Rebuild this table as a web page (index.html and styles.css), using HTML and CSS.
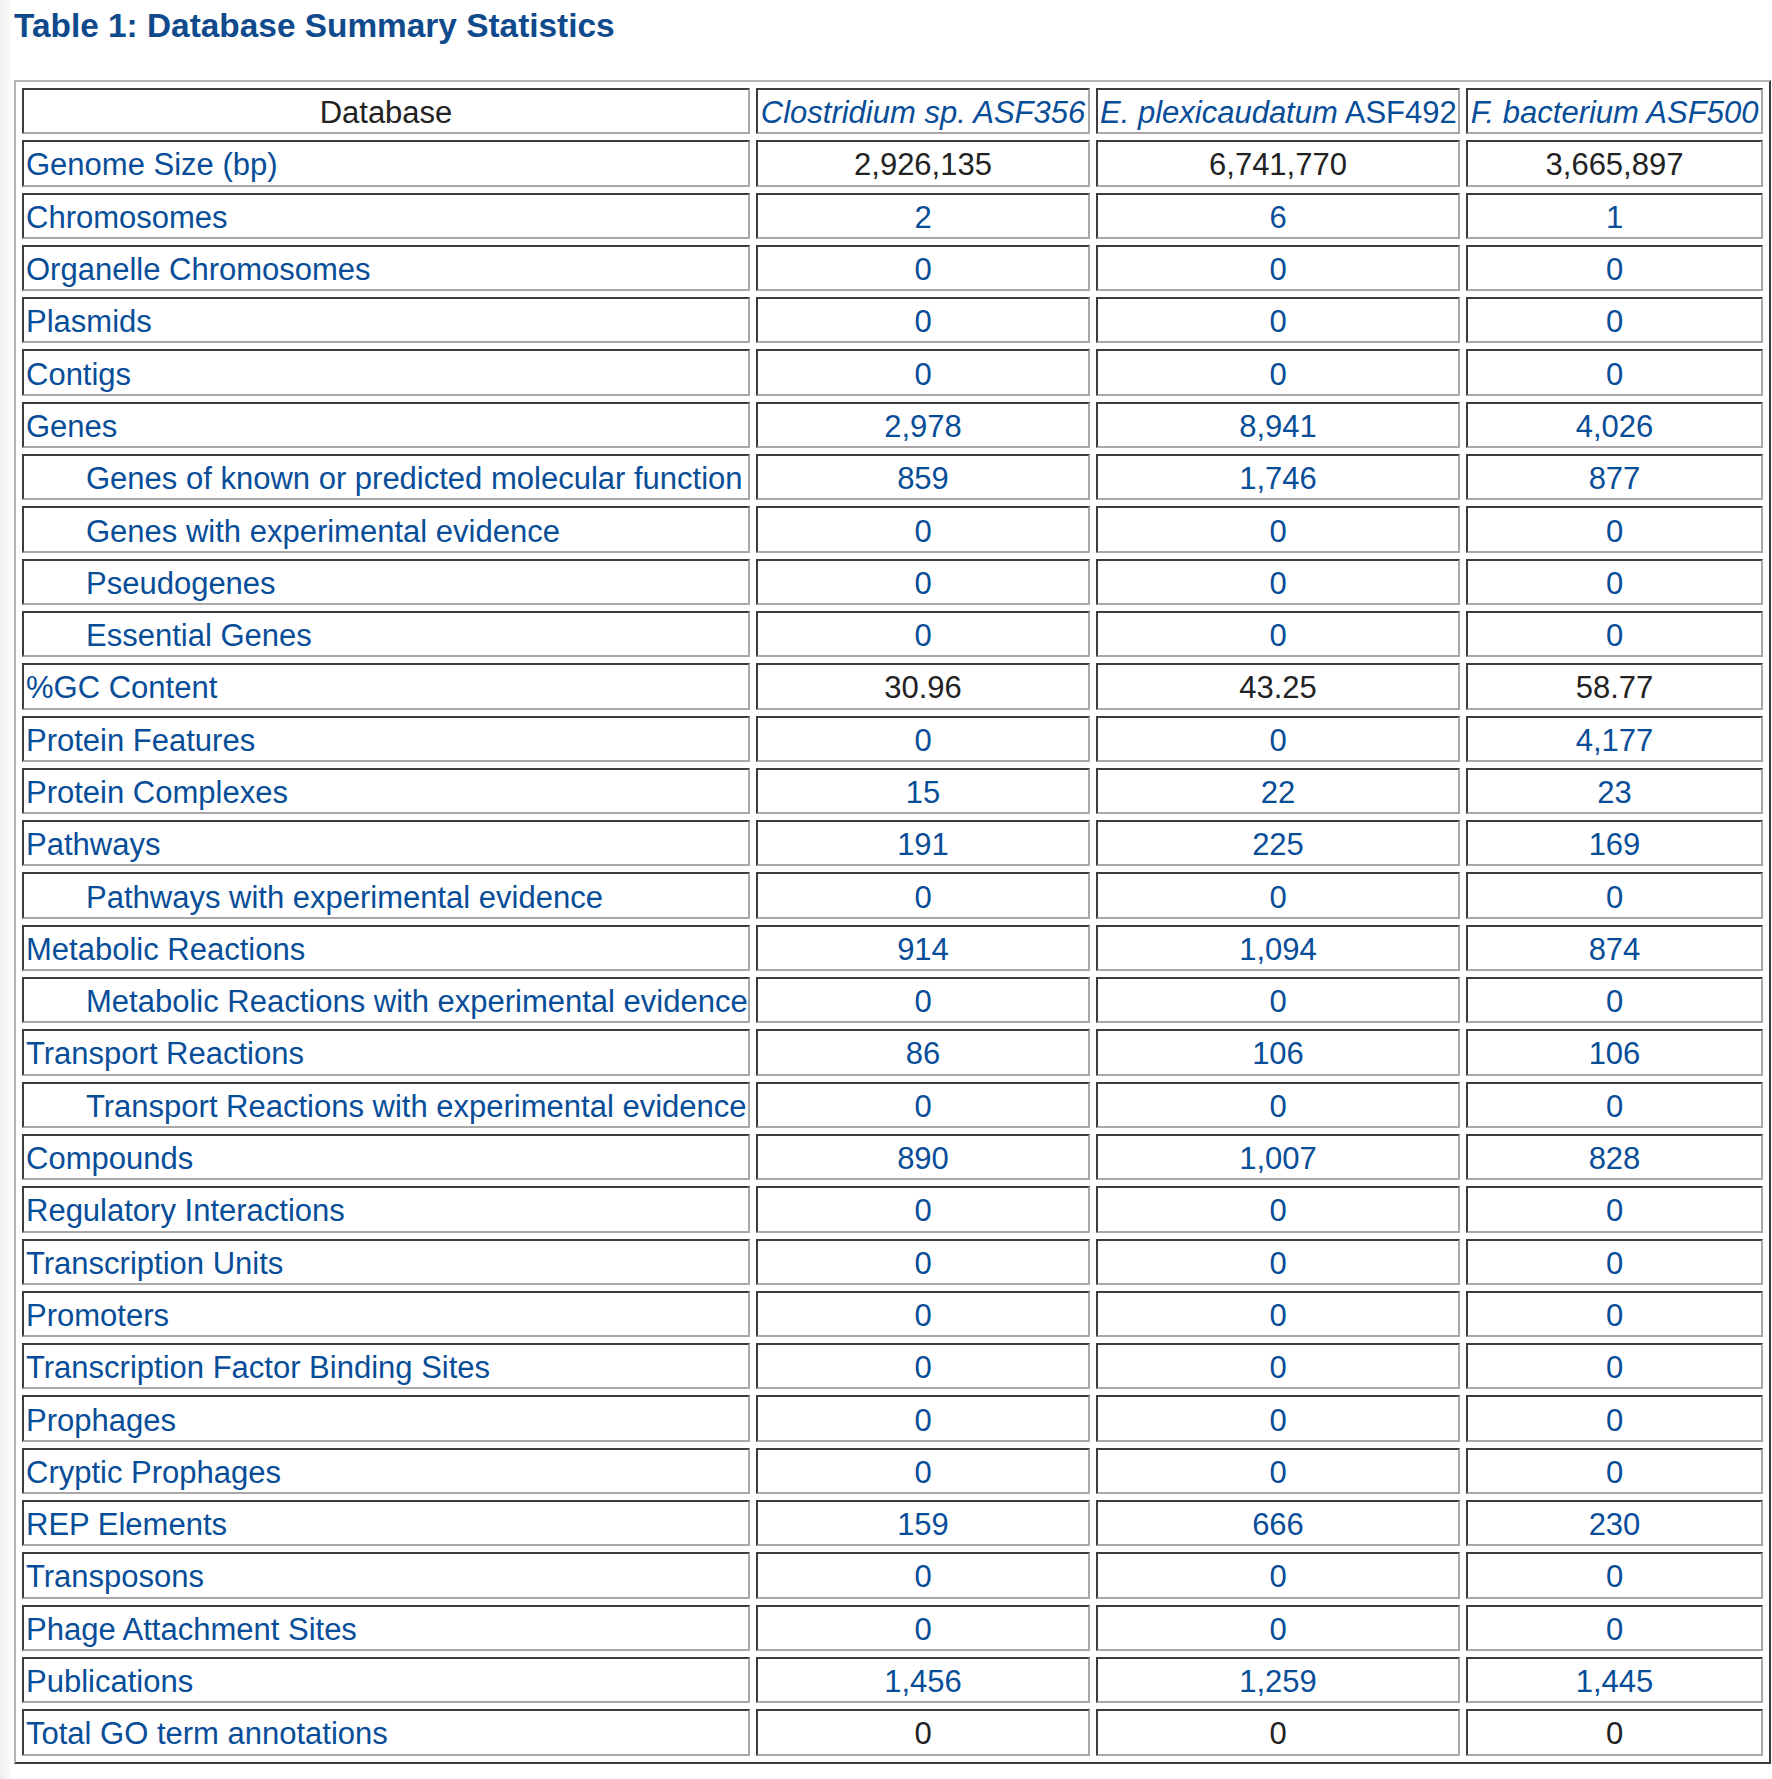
FILE: index.html
```html
<!DOCTYPE html>
<html>
<head>
<meta charset="utf-8">
<title>Database Summary Statistics</title>
<link rel="stylesheet" href="styles.css">
</head>
<body>
<h1 class="title">Table 1: Database Summary Statistics</h1>
<table class="stats">
<colgroup><col class="c1"><col class="c2"><col class="c3"><col class="c4"></colgroup>
<tr><th class="plain">Database</th><th><a><i>Clostridium sp. ASF356</i></a></th><th><a><i>E. plexicaudatum</i> ASF492</a></th><th><a><i>F. bacterium ASF500</i></a></th></tr>
<tr><td class="lbl"><a>Genome Size (bp)</a></td><td class="num">2,926,135</td><td class="num">6,741,770</td><td class="num">3,665,897</td></tr>
<tr><td class="lbl"><a>Chromosomes</a></td><td class="num"><a>2</a></td><td class="num"><a>6</a></td><td class="num"><a>1</a></td></tr>
<tr><td class="lbl"><a>Organelle Chromosomes</a></td><td class="num"><a>0</a></td><td class="num"><a>0</a></td><td class="num"><a>0</a></td></tr>
<tr><td class="lbl"><a>Plasmids</a></td><td class="num"><a>0</a></td><td class="num"><a>0</a></td><td class="num"><a>0</a></td></tr>
<tr><td class="lbl"><a>Contigs</a></td><td class="num"><a>0</a></td><td class="num"><a>0</a></td><td class="num"><a>0</a></td></tr>
<tr><td class="lbl"><a>Genes</a></td><td class="num"><a>2,978</a></td><td class="num"><a>8,941</a></td><td class="num"><a>4,026</a></td></tr>
<tr><td class="lbl sub"><a>Genes of known or predicted molecular function</a></td><td class="num"><a>859</a></td><td class="num"><a>1,746</a></td><td class="num"><a>877</a></td></tr>
<tr><td class="lbl sub"><a>Genes with experimental evidence</a></td><td class="num"><a>0</a></td><td class="num"><a>0</a></td><td class="num"><a>0</a></td></tr>
<tr><td class="lbl sub"><a>Pseudogenes</a></td><td class="num"><a>0</a></td><td class="num"><a>0</a></td><td class="num"><a>0</a></td></tr>
<tr><td class="lbl sub"><a>Essential Genes</a></td><td class="num"><a>0</a></td><td class="num"><a>0</a></td><td class="num"><a>0</a></td></tr>
<tr><td class="lbl"><a>%GC Content</a></td><td class="num">30.96</td><td class="num">43.25</td><td class="num">58.77</td></tr>
<tr><td class="lbl"><a>Protein Features</a></td><td class="num"><a>0</a></td><td class="num"><a>0</a></td><td class="num"><a>4,177</a></td></tr>
<tr><td class="lbl"><a>Protein Complexes</a></td><td class="num"><a>15</a></td><td class="num"><a>22</a></td><td class="num"><a>23</a></td></tr>
<tr><td class="lbl"><a>Pathways</a></td><td class="num"><a>191</a></td><td class="num"><a>225</a></td><td class="num"><a>169</a></td></tr>
<tr><td class="lbl sub"><a>Pathways with experimental evidence</a></td><td class="num"><a>0</a></td><td class="num"><a>0</a></td><td class="num"><a>0</a></td></tr>
<tr><td class="lbl"><a>Metabolic Reactions</a></td><td class="num"><a>914</a></td><td class="num"><a>1,094</a></td><td class="num"><a>874</a></td></tr>
<tr><td class="lbl sub"><a>Metabolic Reactions with experimental evidence</a></td><td class="num"><a>0</a></td><td class="num"><a>0</a></td><td class="num"><a>0</a></td></tr>
<tr><td class="lbl"><a>Transport Reactions</a></td><td class="num"><a>86</a></td><td class="num"><a>106</a></td><td class="num"><a>106</a></td></tr>
<tr><td class="lbl sub"><a>Transport Reactions with experimental evidence</a></td><td class="num"><a>0</a></td><td class="num"><a>0</a></td><td class="num"><a>0</a></td></tr>
<tr><td class="lbl"><a>Compounds</a></td><td class="num"><a>890</a></td><td class="num"><a>1,007</a></td><td class="num"><a>828</a></td></tr>
<tr><td class="lbl"><a>Regulatory Interactions</a></td><td class="num"><a>0</a></td><td class="num"><a>0</a></td><td class="num"><a>0</a></td></tr>
<tr><td class="lbl"><a>Transcription Units</a></td><td class="num"><a>0</a></td><td class="num"><a>0</a></td><td class="num"><a>0</a></td></tr>
<tr><td class="lbl"><a>Promoters</a></td><td class="num"><a>0</a></td><td class="num"><a>0</a></td><td class="num"><a>0</a></td></tr>
<tr><td class="lbl"><a>Transcription Factor Binding Sites</a></td><td class="num"><a>0</a></td><td class="num"><a>0</a></td><td class="num"><a>0</a></td></tr>
<tr><td class="lbl"><a>Prophages</a></td><td class="num"><a>0</a></td><td class="num"><a>0</a></td><td class="num"><a>0</a></td></tr>
<tr><td class="lbl"><a>Cryptic Prophages</a></td><td class="num"><a>0</a></td><td class="num"><a>0</a></td><td class="num"><a>0</a></td></tr>
<tr><td class="lbl"><a>REP Elements</a></td><td class="num"><a>159</a></td><td class="num"><a>666</a></td><td class="num"><a>230</a></td></tr>
<tr><td class="lbl"><a>Transposons</a></td><td class="num"><a>0</a></td><td class="num"><a>0</a></td><td class="num"><a>0</a></td></tr>
<tr><td class="lbl"><a>Phage Attachment Sites</a></td><td class="num"><a>0</a></td><td class="num"><a>0</a></td><td class="num"><a>0</a></td></tr>
<tr><td class="lbl"><a>Publications</a></td><td class="num"><a>1,456</a></td><td class="num"><a>1,259</a></td><td class="num"><a>1,445</a></td></tr>
<tr><td class="lbl"><a>Total GO term annotations</a></td><td class="num">0</td><td class="num">0</td><td class="num">0</td></tr>
</table>
</body>
</html>
```
FILE: styles.css
```css
html, body {
  margin: 0;
  padding: 0;
}
body {
  background: linear-gradient(to right, #efefef 0, #f7f7f7 8px, #ffffff 13px);
  font-family: "Liberation Sans", Arial, Helvetica, sans-serif;
  color: #222;
  min-height: 1779px;
}
.title {
  margin: 0;
  padding: 7px 0 0 14px;
  font-size: 33.4px;
  font-weight: bold;
  line-height: 38px;
  color: #0f4a8c;
}
.stats {
  margin: 35px 0 0 14px;
  table-layout: fixed;
  width: 1755px;
  border-collapse: separate;
  border-spacing: 6px;
  border-style: solid;
  border-width: 2px;
  border-color: #b4b4b4 #3a3a3a #3a3a3a #b4b4b4;
  background: #fff;
  font-size: 31px;
}
.c1 { width: 728px; }
.c2 { width: 334px; }
.c3 { width: 364px; }
.c4 { width: 297px; }
.stats th,
.stats td {
  box-sizing: border-box;
  height: 46.3px;
  padding: 4px 2px 0 2px;
  border-style: solid;
  border-width: 2px;
  border-color: #3c3c3c #a8a8a8 #a8a8a8 #3c3c3c;
  line-height: 36px;
  white-space: nowrap;
  overflow: visible;
  vertical-align: middle;
}
.stats th {
  font-weight: normal;
  text-align: center;
  color: #222;
}
.stats a {
  color: #084d98;
  text-decoration: none;
}
.stats i {
  font-style: italic;
}
.lbl {
  text-align: left;
}
.lbl.sub {
  padding-left: 62px;
}
.num {
  text-align: center;
  color: #222;
}
```
